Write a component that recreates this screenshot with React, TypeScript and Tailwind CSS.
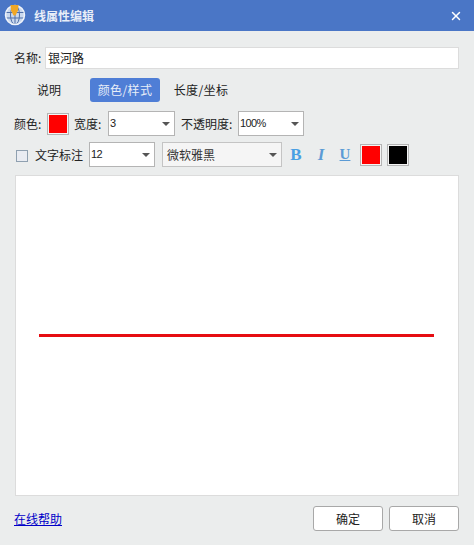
import React from 'react';
import { X } from 'lucide-react';

const font = "font-['Noto_Sans_CJK_SC','Liberation_Sans',sans-serif]";

function Logo() {
  return (
    <svg width="22" height="22" viewBox="0 0 22 22" className="-mt-[1px] shrink-0">
      <circle cx="11" cy="11" r="9.5" fill="#c9d8ee" />
      <g fill="none" stroke="#4f6fa8" strokeWidth="1">
        <ellipse cx="11" cy="11" rx="4.500" ry="9.500" />
        <path d="M2 8.500h18M2 14h18M11 2v18" />
      </g>
      <circle cx="11" cy="11" r="9.500" fill="none" stroke="#f0f4fa" strokeWidth="1.500" />
      <path d="M6.500 1h8l-.5 5.500-2.500 5h-2l-2.500-5z" fill="#f0a726" />
    </svg>
  );
}

function Select({ value, className, labelClass }: { value: string; className: string; labelClass: string }) {
  return (
    <div className={`flex h-[25px] items-center justify-between border pl-[1px] pr-[3px] ${className}`}>
      <span className={labelClass}>{value}</span>
      <span className="mr-[1px] h-0 w-0 border-x-[4px] border-t-[4px] border-x-transparent border-t-[#555]" />
    </div>
  );
}

function Swatch({ color }: { color: string }) {
  return (
    <div className="h-[22px] w-[22px] shrink-0 border border-[#b4b4b4] bg-[#f4f4f4] p-[1px]">
      <div className="h-full w-full" style={{ backgroundColor: color }} />
    </div>
  );
}

const numberSelect = "border-[#b4b4b4] bg-white";
const numberLabel = "font-['Liberation_Sans',sans-serif] text-[11px] leading-none tracking-[-0.6px] text-[#222]";

export default function App() {
  return (
    <div className={`flex h-[545px] w-[474px] flex-col overflow-hidden bg-[#ebeded] text-[12px] text-[#222] ${font}`}>
      {/* Title bar */}
      <div className="flex h-[31px] shrink-0 items-center bg-[#4a76c6] pl-[4px] pr-[11px]">
        <Logo />
        <span className="ml-[8px] text-[12px] font-bold text-[#e8eef8]">线属性编辑</span>
        <X className="ml-auto h-[14px] w-[14px] text-white" strokeWidth={2.5} />
      </div>

      <div className="flex flex-1 flex-col pl-[14px] pr-[15px]">
        {/* Name */}
        <div className="mt-[16px] flex h-[22px] items-center gap-[1px]">
          <span className="w-[30px]">名称:</span>
          <div className="flex h-full flex-1 items-center border border-[#dcdcdc] bg-white pl-[2px] text-[12px]">银河路</div>
        </div>

        {/* Tabs */}
        <div className="mt-[9px] flex h-[24px] items-center text-[12px]">
          <div className="ml-[8px] flex h-full w-[54px] items-center justify-center">说明</div>
          <div className="ml-[14px] flex h-full w-[70px] items-center justify-center rounded-[3px] bg-[#4f7ed6] tracking-[0.4px] text-[#e8eef8]">颜色/样式</div>
          <div className="ml-[6px] flex h-full w-[70px] items-center justify-center tracking-[0.4px]">长度/坐标</div>
        </div>

        {/* Line style */}
        <div className="mt-[9px] flex h-[25px] items-center">
          <span className="w-[30px]">颜色:</span>
          <div className="ml-[3px]"><Swatch color="#ff0000" /></div>
          <span className="ml-[5px] w-[34px]">宽度:</span>
          <Select value="3" className={`w-[67px] ${numberSelect}`} labelClass={numberLabel} />
          <span className="ml-[6px] w-[57px]">不透明度:</span>
          <Select value="100%" className={`w-[66px] ${numberSelect}`} labelClass={numberLabel} />
        </div>

        {/* Text label */}
        <div className="mt-[6px] flex h-[25px] items-center">
          <span className="ml-[2px] mt-[2px] h-[12px] w-[12px] shrink-0 border border-[#8fa0b0] bg-[#e9ecf2]" />
          <span className="ml-[7px] w-[48px]">文字标注</span>
          <Select value="12" className={`ml-[6px] w-[66px] ${numberSelect}`} labelClass={numberLabel} />
          <Select value="微软雅黑" className="ml-[7px] w-[120px] border-[#c4c4c4] bg-[#f5f5f5]" labelClass="pl-[3px] text-[12px] leading-none text-[#333]" />
          <span className="ml-[8px] w-[12px] text-center font-['Liberation_Serif',serif] text-[17px] font-bold leading-none text-[#4a9fe3]">B</span>
          <span className="ml-[13px] w-[12px] text-center font-['Liberation_Serif',serif] text-[17px] font-bold italic leading-none text-[#5b9bd5]">I</span>
          <span className="ml-[12px] w-[12px] text-center font-['Liberation_Serif',serif] text-[15px] font-bold leading-none text-[#5b9bd5] underline">U</span>
          <div className="ml-[9px]"><Swatch color="#ff0000" /></div>
          <div className="ml-[5px]"><Swatch color="#000000" /></div>
        </div>

        {/* Preview */}
        <div className="ml-[1px] mt-[8px] flex h-[321px] items-center border border-[#dcdcdc] bg-white pl-[23px] pr-[24px]">
          <div className="h-[3px] w-full bg-[#e60d12]" />
        </div>

        {/* Footer */}
        <div className="mt-[10px] flex h-[25px] items-center">
          <span className="text-[12px] text-[#0000c8] underline">在线帮助</span>
          <button className="ml-auto h-[25px] w-[70px] rounded-[3px] border border-[#a8a8a8] bg-white text-[12px]">确定</button>
          <button className="ml-[6px] h-[25px] w-[70px] rounded-[3px] border border-[#a8a8a8] bg-white text-[12px]">取消</button>
        </div>
      </div>
    </div>
  );
}
